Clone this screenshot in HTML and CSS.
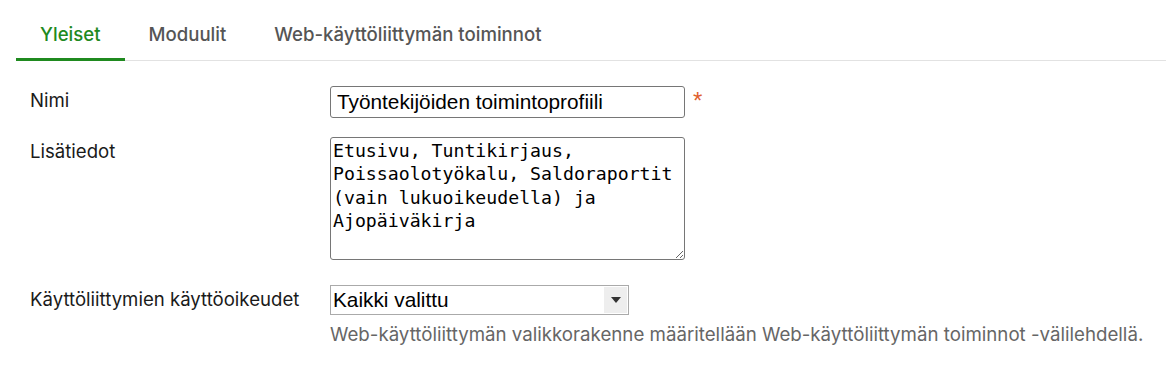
FILE: index.html
```html
<!DOCTYPE html>
<html lang="fi">
<head>
<meta charset="utf-8">
<title>Toimintoprofiili</title>
<link rel="stylesheet" href="styles.css">
</head>
<body>
<div class="page">
  <nav class="tabs">
    <div class="tab active">Yleiset</div>
    <div class="tab">Moduulit</div>
    <div class="tab">Web-käyttöliittymän toiminnot</div>
  </nav>
  <form class="form">
    <div class="row">
      <label class="label">Nimi</label>
      <div class="field">
        <input class="input" type="text" value="Työntekijöiden toimintoprofiili">
        <span class="required">*</span>
      </div>
    </div>
    <div class="row row-area">
      <label class="label">Lisätiedot</label>
      <div class="field">
        <textarea class="textarea">Etusivu, Tuntikirjaus, Poissaolotyökalu, Saldoraportit (vain lukuoikeudella) ja Ajopäiväkirja</textarea>
      </div>
    </div>
    <div class="row row-select">
      <label class="label">Käyttöliittymien käyttöoikeudet</label>
      <div class="field field-col">
        <div class="select">
          <span class="select-value">Kaikki valittu</span>
          <span class="select-arrow"><svg width="10" height="6" viewBox="0 0 10 6"><path d="M0 0H10L5 6Z" fill="#333"/></svg></span>
        </div>
        <p class="help">Web-käyttöliittymän valikkorakenne määritellään Web-käyttöliittymän toiminnot -välilehdellä.</p>
      </div>
    </div>
  </form>
</div>
</body>
</html>
```
FILE: styles.css
```css
html, body {
  margin: 0;
  padding: 0;
  background: #fff;
}
body {
  font-family: Inter, "Noto Sans", sans-serif;
  color: #222;
}
.page {
  padding-left: 16px;
}
.tabs {
  display: flex;
  border-bottom: 1px solid #e2e2e2;
}
.tab {
  padding: 24px 24px 14px;
  line-height: 20px;
  font-size: 18.6px;
  font-weight: 500;
  color: #555;
  border-bottom: 3px solid transparent;
  margin-bottom: -1px;
}
.tab.active {
  color: #1f8a1f;
  border-bottom-color: #1f8a1f;
}
.form {
  padding: 25px 0 0 14px;
}
.row {
  display: grid;
  grid-template-columns: 300px 1fr;
  align-items: start;
}
.row-area {
  margin-top: 19px;
}
.row-select {
  margin-top: 25px;
}
.label {
  font-size: 18.6px;
  line-height: 22px;
  padding-top: 3px;
  color: #1a1a1a;
}
.field {
  display: flex;
  align-items: flex-start;
}
.field-col {
  flex-direction: column;
}
.input {
  box-sizing: border-box;
  width: 355px;
  height: 32px;
  margin: 0;
  border: 1px solid #767676;
  border-radius: 3px;
  padding: 1px 6px;
  font-family: "Liberation Sans", Arial, sans-serif;
  font-size: 20.8px;
  color: #000;
}
.required {
  color: #e0602f;
  font-family: "Liberation Sans", Arial, sans-serif;
  font-size: 24px;
  line-height: 24px;
  margin-left: 8px;
  margin-top: 3px;
}
.textarea {
  box-sizing: border-box;
  width: 355px;
  height: 123px;
  margin: 0;
  border: 1px solid #767676;
  border-radius: 3px;
  padding: 1px 2px;
  font-family: "DejaVu Sans Mono", "Liberation Mono", monospace;
  font-size: 18.2px;
  line-height: 23.3px;
  color: #000;
  resize: vertical;
}
.select {
  box-sizing: border-box;
  width: 299px;
  height: 30px;
  border: 1px solid #aaa;
  display: flex;
  align-items: stretch;
  font-family: "Liberation Sans", Arial, sans-serif;
  font-size: 20.8px;
  color: #000;
}
.select-value {
  flex: 1;
  padding-left: 2px;
  line-height: 28px;
}
.select-arrow {
  width: 23px;
  margin: 1px;
  background: #eee;
  display: flex;
  align-items: center;
  justify-content: center;
}
.help {
  margin: 9px 0 0;
  font-size: 18.7px;
  line-height: 22px;
  color: #666;
}
```
